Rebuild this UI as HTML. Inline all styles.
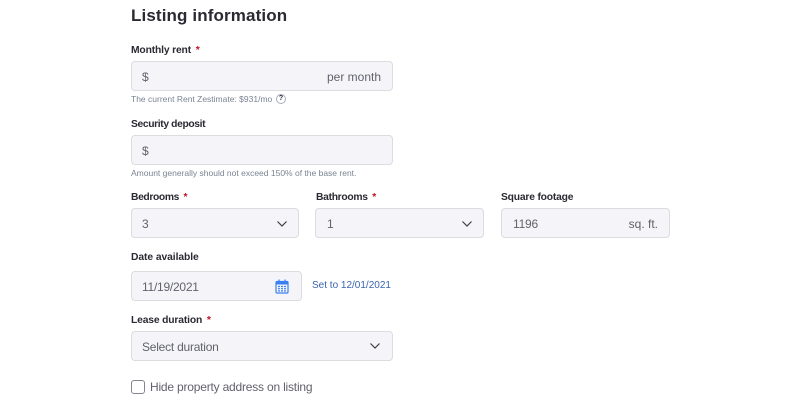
<!DOCTYPE html>
<html><head><meta charset="utf-8"><style>
html,body{margin:0;padding:0;background:#fff;width:810px;height:406px;overflow:hidden}
body{position:relative;font-family:"Liberation Sans",sans-serif}
.t{position:absolute;white-space:nowrap;line-height:1}
.l{font-size:10.3px;font-weight:700;color:#2a2a33;letter-spacing:-.15px}
.l b{color:#c1121f;margin-left:2px}
.v{font-size:12px;color:#62626c;letter-spacing:-.2px}
.h{font-size:8.5px;color:#7a8494;letter-spacing:0}
.b{position:absolute;box-sizing:border-box;background:#f4f4f9;border:1px solid #dcdce0;border-radius:4px;height:30px}
svg{position:absolute}
</style></head><body>
<div class="t" style="left:131px;top:7px;font-size:17px;font-weight:700;color:#2a2a33;letter-spacing:.12px">Listing information</div>

<div class="t l" style="left:131px;top:46px">Monthly rent <b>*</b></div>
<div class="b" style="left:131px;top:61px;width:262px"></div>
<div class="t v" style="left:142px;top:70.5px">$</div>
<div class="t v" style="right:429px;top:70.5px;letter-spacing:0">per month</div>
<div class="t h" style="left:131px;top:95px">The current Rent Zestimate: $931/mo</div>
<div class="t" style="left:276px;top:94px;width:10px;height:10px;box-sizing:border-box;border:1px solid #a8afba;border-radius:50%;font-size:7px;font-weight:700;text-align:center;line-height:8px;color:#2a2a33">?</div>

<div class="t l" style="left:131px;top:120px;letter-spacing:-.37px">Security deposit</div>
<div class="b" style="left:131px;top:135px;width:262px"></div>
<div class="t v" style="left:142px;top:144.5px">$</div>
<div class="t h" style="left:131px;top:169px">Amount generally should not exceed 150% of the base rent.</div>

<div class="t l" style="left:131px;top:193px;letter-spacing:-.37px">Bedrooms <b>*</b></div>
<div class="b" style="left:131px;top:208px;width:168px"></div>
<div class="t v" style="left:142px;top:217.5px">3</div>
<svg style="left:276px;top:220px" width="12" height="8" viewBox="0 0 12 8"><path d="M1.5 1.5l4.5 4.5 4.5-4.5" fill="none" stroke="#3c3c45" stroke-width="1.2"/></svg>

<div class="t l" style="left:316px;top:193px;letter-spacing:-.3px">Bathrooms <b>*</b></div>
<div class="b" style="left:315px;top:208px;width:169px"></div>
<div class="t v" style="left:327px;top:217.5px">1</div>
<svg style="left:461px;top:220px" width="12" height="8" viewBox="0 0 12 8"><path d="M1.5 1.5l4.5 4.5 4.5-4.5" fill="none" stroke="#3c3c45" stroke-width="1.2"/></svg>

<div class="t l" style="left:501px;top:193px;letter-spacing:-.19px">Square footage</div>
<div class="b" style="left:501px;top:208px;width:169px"></div>
<div class="t v" style="left:513px;top:217.5px">1196</div>
<div class="t v" style="right:152px;top:217.5px;letter-spacing:0">sq. ft.</div>

<div class="t l" style="left:131px;top:253px;letter-spacing:-.07px">Date available</div>
<div class="b" style="left:131px;top:271px;width:171px"></div>
<div class="t v" style="left:142px;top:280.5px;letter-spacing:-.25px">11/19/2021</div>
<svg style="left:275px;top:279px" width="14" height="15" viewBox="0 0 14 15"><rect x="1" y="2.5" width="12" height="11.5" rx="1" fill="none" stroke="#3b7ff0" stroke-width="1.2"/><rect x="1" y="2.5" width="12" height="3" fill="#3b7ff0"/><path d="M4 .5v3M10 .5v3" stroke="#3b7ff0" stroke-width="1.2"/><path d="M3 7.5h8M3 9.7h8M3 11.9h8" stroke="#3b7ff0" stroke-width="1.2" stroke-dasharray="2 1"/></svg>
<div class="t" style="left:312px;top:281px;font-size:10px;color:#3c64ae;letter-spacing:0">Set to 12/01/2021</div>

<div class="t l" style="left:131px;top:316px">Lease duration <b>*</b></div>
<div class="b" style="left:131px;top:331px;width:262px"></div>
<div class="t v" style="left:142px;top:340.5px;letter-spacing:-.23px">Select duration</div>
<svg style="left:369px;top:342px" width="12" height="8" viewBox="0 0 12 8"><path d="M1.5 1.5l4.5 4.5 4.5-4.5" fill="none" stroke="#3c3c45" stroke-width="1.2"/></svg>

<div style="position:absolute;left:131px;top:380px;width:14px;height:14px;box-sizing:border-box;border:1.3px solid #85858d;border-radius:3px;background:#fff"></div>
<div class="t v" style="left:150px;top:381px;letter-spacing:-.2px">Hide property address on listing</div>
</body></html>
